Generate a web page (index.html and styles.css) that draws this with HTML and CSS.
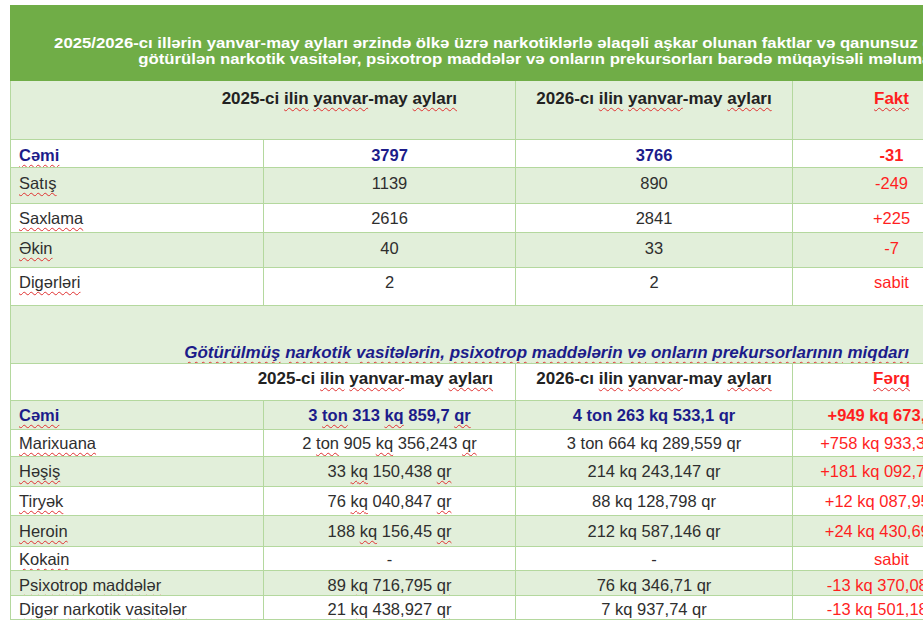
FILE: index.html
```html
<!DOCTYPE html>
<html lang="az">
<head>
<meta charset="utf-8">
<title>Narkotik faktlar</title>
<link rel="stylesheet" href="styles.css">
</head>
<body>
<div class="sheet">
<table class="grid">
  <colgroup>
    <col class="c1"><col class="c2"><col class="c3"><col class="c4"><col class="c5">
  </colgroup>
  <tr class="r-title">
    <td colspan="5" class="title"><span class="title-text">2025/2026-cı illərin yanvar-may ayları ərzində ölkə üzrə narkotiklərlə əlaqəli aşkar olunan faktlar və qanunsuz dövriyyədən<br>götürülən narkotik vasitələr, psixotrop maddələr və onların prekursorları barədə müqayisəli məlumat</span></td>
  </tr>
  <tr class="r-head1 g">
    <td colspan="2" class="hd hd-left">2025-ci <span class="sq">ilin</span> <span class="sq">yanvar</span>-may <span class="sq">ayları</span></td>
    <td class="hd ctr">2026-cı <span class="sq">ilin</span> <span class="sq">yanvar</span>-may <span class="sq">ayları</span></td>
    <td class="hd ctr red"><span class="sq">Fakt</span></td>
    <td></td>
  </tr>
  <tr class="r-a w tot">
    <td class="lbl"><span class="sq">Cəmi</span></td><td class="ctr">3797</td><td class="ctr">3766</td><td class="ctr red">-31</td><td></td>
  </tr>
  <tr class="r-b g">
    <td class="lbl"><span class="sq">Satış</span></td><td class="ctr">1139</td><td class="ctr">890</td><td class="ctr red">-249</td><td></td>
  </tr>
  <tr class="r-c w">
    <td class="lbl"><span class="sq">Saxlama</span></td><td class="ctr">2616</td><td class="ctr">2841</td><td class="ctr red">+225</td><td></td>
  </tr>
  <tr class="r-d g">
    <td class="lbl"><span class="sq">Əkin</span></td><td class="ctr">40</td><td class="ctr">33</td><td class="ctr red">-7</td><td></td>
  </tr>
  <tr class="r-e w">
    <td class="lbl"><span class="sq">Digərləri</span></td><td class="ctr">2</td><td class="ctr">2</td><td class="ctr red">sabit</td><td></td>
  </tr>
  <tr class="r-sub g">
    <td colspan="5" class="subtitle"><span class="sq">Götürülmüş</span> <span class="sq">narkotik</span> <span class="sq">vasitələrin</span>, <span class="sq">psixotrop</span> <span class="sq">maddələrin</span> <span class="sq">və</span> <span class="sq">onların</span> <span class="sq">prekursorlarının</span> <span class="sq">miqdarı</span></td>
  </tr>
  <tr class="r-head2 w">
    <td colspan="2" class="hd hd-left2">2025-ci <span class="sq">ilin</span> <span class="sq">yanvar</span>-may <span class="sq">ayları</span></td>
    <td class="hd ctr">2026-cı <span class="sq">ilin</span> <span class="sq">yanvar</span>-may <span class="sq">ayları</span></td>
    <td class="hd ctr red"><span class="sq">Fərq</span></td>
    <td></td>
  </tr>
  <tr class="r-1 g tot">
    <td class="lbl"><span class="sq">Cəmi</span></td><td class="ctr">3 <span class="sq">ton</span> 313 <span class="sq">kq</span> 859,7 <span class="sq">qr</span></td><td class="ctr">4 ton 263 kq 533,1 qr</td><td class="ctr red">+949 kq 673,6 qr</td><td></td>
  </tr>
  <tr class="r-2 w">
    <td class="lbl"><span class="sq">Marixuana</span></td><td class="ctr">2 <span class="sq">ton</span> 905 <span class="sq">kq</span> 356,243 <span class="sq">qr</span></td><td class="ctr">3 ton 664 kq 289,559 qr</td><td class="ctr red">+758 kq 933,316 qr</td><td></td>
  </tr>
  <tr class="r-3 g">
    <td class="lbl"><span class="sq">Həşiş</span></td><td class="ctr">33 <span class="sq">kq</span> 150,438 <span class="sq">qr</span></td><td class="ctr">214 kq 243,147 qr</td><td class="ctr red">+181 kq 092,709 qr</td><td></td>
  </tr>
  <tr class="r-4 w">
    <td class="lbl"><span class="sq">Tiryək</span></td><td class="ctr">76 <span class="sq">kq</span> 040,847 <span class="sq">qr</span></td><td class="ctr">88 kq 128,798 qr</td><td class="ctr red">+12 kq 087,951 qr</td><td></td>
  </tr>
  <tr class="r-5 g">
    <td class="lbl"><span class="sq">Heroin</span></td><td class="ctr">188 <span class="sq">kq</span> 156,45 <span class="sq">qr</span></td><td class="ctr">212 kq 587,146 qr</td><td class="ctr red">+24 kq 430,696 qr</td><td></td>
  </tr>
  <tr class="r-6 w">
    <td class="lbl"><span class="sq">Kokain</span></td><td class="ctr">-</td><td class="ctr">-</td><td class="ctr red">sabit</td><td></td>
  </tr>
  <tr class="r-7 g">
    <td class="lbl"><span class="sq">Psixotrop</span> <span class="sq">maddələr</span></td><td class="ctr">89 <span class="sq">kq</span> 716,795 <span class="sq">qr</span></td><td class="ctr">76 kq 346,71 qr</td><td class="ctr red">-13 kq 370,085 qr</td><td></td>
  </tr>
  <tr class="r-8 w">
    <td class="lbl"><span class="sq">Digər</span> <span class="sq">narkotik</span> <span class="sq">vasitələr</span></td><td class="ctr">21 <span class="sq">kq</span> 438,927 <span class="sq">qr</span></td><td class="ctr">7 kq 937,74 qr</td><td class="ctr red">-13 kq 501,187 qr</td><td></td>
  </tr>
</table>
</div>
</body>
</html>
```

FILE: styles.css
```css
html, body {
  margin: 0;
  padding: 0;
  background: #ffffff;
  overflow: hidden;
}
body {
  width: 923px;
  height: 630px;
}
.sheet {
  padding: 5px 0 0 10px;
}
.grid {
  border-collapse: collapse;
  table-layout: fixed;
  width: 1054px;
  font-family: "Liberation Sans", Arial, sans-serif;
  font-size: 16.5px;
  color: #2e2e2e;
}
.c1 { width: 253px; }
.c2 { width: 252px; }
.c3 { width: 277px; }
.c4 { width: 198px; }
.c5 { width: 74px; }
.grid td {
  border: 1px solid #b4d89e;
  padding: 0 8px;
  white-space: nowrap;
  overflow: hidden;
  vertical-align: middle;
  line-height: 19px;
}
.grid .g td { background: #e2efda; }
.grid .w td { background: #ffffff; }
.grid .title {
  background: #70ad47;
  color: #ffffff;
  font-weight: bold;
  font-size: 14px;
  line-height: 16px;
  text-align: center;
  vertical-align: top;
  height: 45px;
  padding: 29px 0 0 0;
  border-color: #70ad47;
}
.title-text {
  display: inline-block;
  transform: scaleX(1.195);
  transform-origin: 50% 50%;
}
.grid .hd { font-weight: bold; color: #222222; font-size: 17px; }
.ctr { text-align: center; }
.grid .red { color: #ff1f1f; }
.grid .tot td { font-weight: bold; color: #1c1c8a; }
.grid .tot td.red { color: #ff1f1f; }
.lbl { text-align: left; }
.sq {
  text-decoration: underline wavy #e03030;
  text-decoration-thickness: 1px;
  text-underline-offset: 3px;
  text-decoration-skip-ink: none;
}
.grid .r-head1 td { height: 50px; vertical-align: top; padding-top: 8px; }
.grid .hd-left { text-align: right; padding-right: 58px; }
.grid .hd-left2 { text-align: right; padding-right: 22px; }
.grid .r-a td { height: 24px; padding-top: 3px; }
.grid .r-b td { height: 30px; padding-bottom: 5px; }
.grid .r-c td { height: 28px; }
.grid .r-d td { height: 31px; padding-bottom: 3px; }
.grid .r-e td { height: 29px; padding-bottom: 8px; }
.grid .r-sub td { height: 56px; vertical-align: bottom; padding-bottom: 1px; }
.grid .subtitle {
  font-weight: bold;
  font-style: italic;
  color: #1c1c8a;
  text-align: center;
  font-size: 17px;
  padding-left: 18px;
  padding-right: 0;
}
.grid .r-head2 td { height: 29px; padding-bottom: 7px; }
.grid .r-1 td { height: 28px; }
.grid .r-2 td { height: 26px; }
.grid .r-3 td { height: 29px; }
.grid .r-4 td { height: 28px; }
.grid .r-5 td { height: 30px; }
.grid .r-6 td { height: 21px; padding-top: 2px; }
.grid .r-7 td { height: 20px; padding-top: 4px; }
.grid .r-8 td { height: 19px; padding-top: 4px; }
```
